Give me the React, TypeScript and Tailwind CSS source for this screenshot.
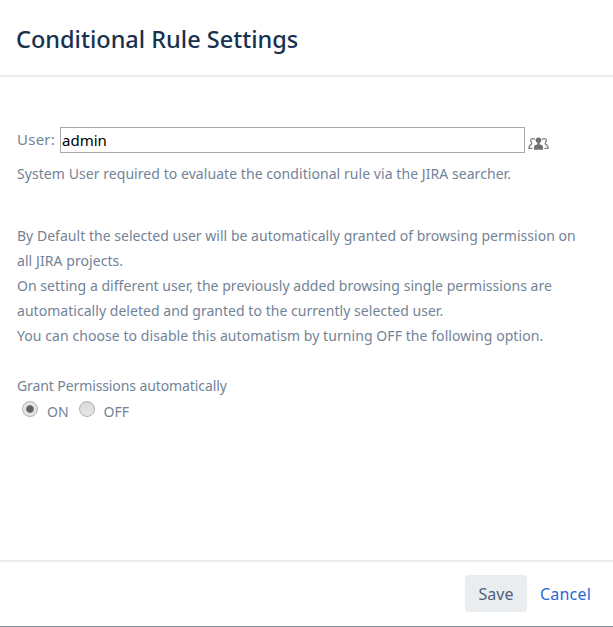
import { useState } from "react"
import clsx from "clsx"

const description = [
  { text: "By Default the selected user will be automatically granted of browsing permission on", tracking: "tracking-[0.025px]" },
  { text: "all JIRA projects.", tracking: "tracking-[0.07px]" },
  { text: "On setting a different user, the previously added browsing single permissions are", tracking: "tracking-[0.04px]" },
  { text: "automatically deleted and granted to the currently selected user.", tracking: "tracking-[0.04px]" },
  { text: "You can choose to disable this automatism by turning OFF the following option.", tracking: "tracking-[0.07px]" },
]

function UsersIcon() {
  return (
    <svg width="21" height="14" viewBox="0 0 21 14" fill="none">
      <path
        d="M2.9 4.6C2 2.8 3.2 1.6 4.8 1.6C5.8 1.6 6.4 2 6.9 2.7M3.2 4.4C3.3 5.8 4 6.2 3.6 7.2C1.7 7.8 1 8.8 1 11.3H4.6M18.1 4.6C19 2.8 17.8 1.6 16.2 1.6C15.2 1.6 14.6 2 14.1 2.7M17.8 4.4C17.7 5.8 17 6.2 17.4 7.2C19.3 7.8 20 8.8 20 11.3H16.4"
        stroke="#858585"
        strokeWidth="1.3"
      />
      <ellipse cx="10.5" cy="3.3" rx="2.8" ry="2.7" fill="#707070" />
      <path d="M9.4 5.5H11.6V8H9.4Z" fill="#707070" />
      <path d="M6 12.8V10.7C6 8.6 7.3 7.6 9 7.5H12C13.7 7.6 15 8.6 15 10.7V12.8Z" fill="#707070" />
    </svg>
  )
}

export default function App() {
  const [user, setUser] = useState("admin")
  const [grant, setGrant] = useState("ON")

  return (
    <div className="flex h-[627px] w-[613px] flex-col overflow-hidden border-b border-[#8494a3] bg-white font-['Noto_Sans',sans-serif] text-sm text-[#738397]">
      <header className="h-[77px] shrink-0 border-b-2 border-[#ebecf0] px-4 pt-[22px]">
        <h1 className="text-[23.5px] leading-[34px] font-medium whitespace-nowrap text-[#18314f]">
          Conditional Rule Settings
        </h1>
      </header>

      <main className="flex-1 pt-[50px] pr-4 pl-[17px]">
        <div className="flex items-center">
          <label htmlFor="user" className="w-[43px] shrink-0 text-[15px] tracking-[0.25px]">
            User:
          </label>
          <input
            id="user"
            value={user}
            onChange={(e) => setUser(e.target.value)}
            className="h-[26px] w-[465px] border border-[#a9a9a9] pr-0.5 pl-px text-[15px] text-black outline-none"
          />
          <button className="mt-[7px] ml-[3px]" aria-label="Select user">
            <UsersIcon />
          </button>
        </div>
        <p className="mt-2 leading-[25px] tracking-[0.06px] whitespace-nowrap">
          System User required to evaluate the conditional rule via the JIRA searcher.
        </p>

        <div className="mt-[37px]">
          {description.map((line) => (
            <p key={line.text} className="leading-[25px] whitespace-nowrap">
              <span className={line.tracking}>{line.text}</span>
            </p>
          ))}
        </div>

        <p className="mt-[25px] leading-[25px] tracking-[-0.1px]">Grant Permissions automatically</p>
        <div className="flex pl-[5px]">
          {["ON", "OFF"].map((value) => (
            <label key={value} className="mr-[10px] flex gap-[9px] leading-[27px]">
              <input
                type="radio"
                name="grant"
                checked={grant === value}
                onChange={() => setGrant(value)}
                className={clsx(
                  "mt-[3px] size-4 appearance-none rounded-full border border-[#b0b0b0]",
                  grant === value
                    ? "bg-[radial-gradient(circle,#606060_3.2px,#e4e4e4_4.4px)]"
                    : "bg-linear-to-b from-[#d8d8d8] to-[#e8e8e8]"
                )}
              />
              {value}
            </label>
          ))}
        </div>
      </main>

      <footer className="flex h-[66px] shrink-0 items-start border-t-2 border-[#ebecf0] pt-[13px] pl-[465px] text-base">
        <button className="h-[37px] w-[62px] rounded-[3px] bg-[#e9edf0] text-[#505f79]">Save</button>
        <button className="ml-[13px] h-[37px] tracking-[0.2px] text-[#2968d4]">Cancel</button>
      </footer>
    </div>
  )
}
